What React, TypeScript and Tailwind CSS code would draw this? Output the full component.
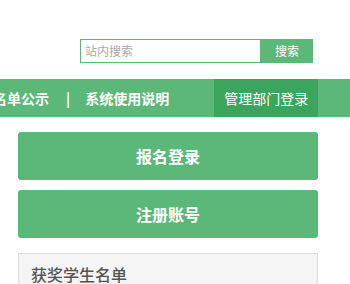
const font = { fontFamily: '"Noto Sans CJK SC", "Noto Sans", sans-serif' };

export default function App() {
  return (
    <div className="w-[350px] h-[284px] overflow-hidden bg-white" style={font}>
      {/* Search */}
      <div className="flex pt-[39px] pl-[80px]">
        <div className="flex h-[24px] w-[181px] items-center border border-[#5cb879] pl-[4px]">
          <span className="text-[12px] leading-none text-[#a9a9a9]">站内搜索</span>
        </div>
        <button className="flex h-[24px] w-[52px] items-center justify-center bg-[#5cb879] text-[12px] leading-none text-white">
          搜索
        </button>
      </div>

      {/* Nav */}
      <div className="mt-[16px] flex h-[38px] items-center bg-[#5cb879] text-[14px] text-white">
        <span className="ml-[-7px] font-bold">名单公示</span>
        <span className="ml-[17px] font-bold">|</span>
        <span className="ml-[15px] font-bold">系统使用说明</span>
        <span className="ml-[45px] flex h-full w-[104px] items-center justify-center bg-[#3ba55d]">
          管理部门登录
        </span>
      </div>

      {/* Actions */}
      <div className="mx-[18px] mt-[15px] flex w-[300px] flex-col gap-[10px]">
        <button className="flex h-[48px] items-center justify-center rounded-[3px] bg-[#5cb879] text-[16px] font-bold text-white">
          报名登录
        </button>
        <button className="flex h-[48px] items-center justify-center rounded-[3px] bg-[#5cb879] text-[16px] font-bold text-white">
          注册账号
        </button>
      </div>

      {/* Panel */}
      <div className="mx-[18px] mt-[15px] w-[300px] border border-[#dddddd] bg-[#f5f5f5] px-[12px] pt-[9px] pb-[10px]">
        <h3 className="text-[16px] font-medium leading-[22px] text-[#555555]">获奖学生名单</h3>
      </div>
    </div>
  );
}
